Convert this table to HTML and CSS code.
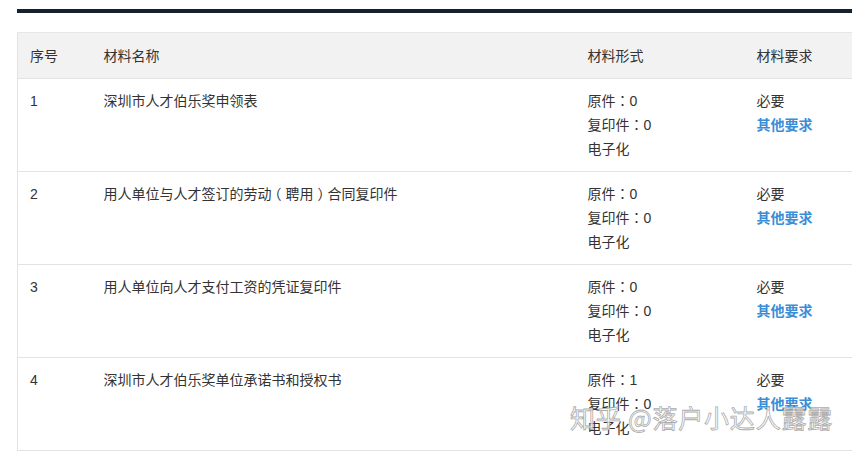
FILE: index.html
```html
<!DOCTYPE html>
<html lang="zh">
<head>
<meta charset="utf-8">
<link rel="stylesheet" href="styles.css">
</head>
<body>
<div class="page">
  <div class="topbar"></div>
  <table class="materials">
    <colgroup>
      <col class="c-no"><col class="c-name"><col class="c-form"><col class="c-req">
    </colgroup>
    <thead>
      <tr><th>序号</th><th>材料名称</th><th>材料形式</th><th>材料要求</th></tr>
    </thead>
    <tbody>
      <tr>
        <td>1</td>
        <td>深圳市人才伯乐奖申领表</td>
        <td><div>原件<span class="colon">：</span>0</div><div>复印件<span class="colon">：</span>0</div><div>电子化</div></td>
        <td><div>必要</div><div class="link">其他要求</div></td>
      </tr>
      <tr>
        <td>2</td>
        <td>用人单位与人才签订的劳动<span class="popen">（</span>聘用<span class="pclose">）</span>合同复印件</td>
        <td><div>原件<span class="colon">：</span>0</div><div>复印件<span class="colon">：</span>0</div><div>电子化</div></td>
        <td><div>必要</div><div class="link">其他要求</div></td>
      </tr>
      <tr>
        <td>3</td>
        <td>用人单位向人才支付工资的凭证复印件</td>
        <td><div>原件<span class="colon">：</span>0</div><div>复印件<span class="colon">：</span>0</div><div>电子化</div></td>
        <td><div>必要</div><div class="link">其他要求</div></td>
      </tr>
      <tr>
        <td>4</td>
        <td>深圳市人才伯乐奖单位承诺书和授权书</td>
        <td><div>原件<span class="colon">：</span>1</div><div>复印件<span class="colon">：</span>0</div><div>电子化</div></td>
        <td><div>必要</div><div class="link">其他要求</div></td>
      </tr>
    </tbody>
  </table>
  <div class="watermark">知乎 @落户小达人露露</div>
</div>
</body>
</html>
```
FILE: styles.css
```css
html, body {
  margin: 0;
  padding: 0;
  background: #fff;
  overflow: hidden;
}
.page {
  position: relative;
  width: 852px;
  height: 454px;
  padding: 9px 0 0 17px;
  box-sizing: border-box;
  font-family: "Liberation Sans", "Noto Sans CJK SC", sans-serif;
  font-size: 14px;
  color: #333;
}
.topbar {
  height: 4px;
  background: #15212c;
  margin-right: -20px;
}
.materials {
  margin-top: 19px;
  width: 860px;
  border-collapse: collapse;
  table-layout: fixed;
  border-left: 1px solid #e3e3e3;
}
.c-no { width: 74px; }
.c-name { width: 484px; }
.c-form { width: 169px; }
.c-req { width: 133px; }
.materials th {
  background: #f2f2f2;
  font-weight: normal;
  text-align: left;
  height: 45px;
  padding: 0 12px;
  line-height: 20px;
  border-top: 1px solid #e6e6e6;
  border-bottom: 1px solid #e3e3e3;
}
.materials td {
  vertical-align: top;
  padding: 10px 12px 10px;
  line-height: 24px;
  height: 72px;
  border-bottom: 1px solid #e3e3e3;
}
.colon,
.popen,
.pclose {
  display: inline-block;
  width: 14px;
  line-height: 14px;
  white-space: nowrap;
  overflow: visible;
}
.colon {
  text-align: center;
  font-family: "Noto Sans CJK TC", sans-serif;
}
.popen {
  text-indent: -4px;
  font-family: "Noto Sans CJK SC", sans-serif;
}
.pclose {
  text-indent: 4px;
  font-family: "Noto Sans CJK SC", sans-serif;
}
.link {
  color: #3a8ed6;
  font-weight: bold;
}
.watermark {
  position: absolute;
  left: 570px;
  top: 401px;
  font-family: "Noto Sans CJK SC", sans-serif;
  font-size: 25px;
  line-height: 32px;
  color: rgba(255, 255, 255, 0.8);
  -webkit-text-stroke: 0.8px #adadad;
  white-space: nowrap;
  letter-spacing: 0.8px;
}
```
